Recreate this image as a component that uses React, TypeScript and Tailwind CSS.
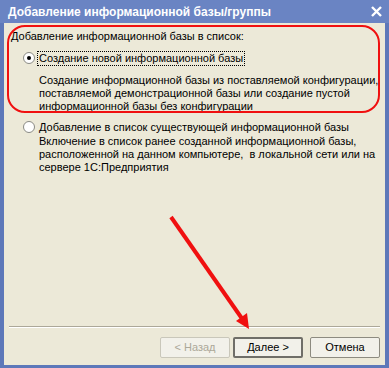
import React from 'react';

const font = { fontFamily: '"Liberation Sans", Arial, sans-serif' };

const Radio = ({ checked }: { checked?: boolean }) => (
  <span className="w-[12px] h-[12px] rounded-full border border-[#8a8a84] bg-white flex items-center justify-center shrink-0">
    {checked && <span className="w-[4px] h-[4px] rounded-full bg-black" />}
  </span>
);

const Button = ({ label, variant }: { label: string; variant?: 'default' | 'disabled' }) => {
  const cls =
    variant === 'default'
      ? 'border-2 border-[#6f6e68] text-black'
      : variant === 'disabled'
      ? 'border border-[#c9c7ba] text-[#aca899]'
      : 'border border-[#8d8b80] text-black';
  return (
    <div
      className={`w-[70px] h-[21px] rounded-[2px] bg-[#f2f1ea] flex items-center justify-center text-[11px] ${cls}`}
    >
      {label}
    </div>
  );
};

const App = () => {
  return (
    <div className="w-[389px] h-[368px] bg-[#5d78b9] flex flex-col relative overflow-hidden" style={font}>
      <div className="h-[23px] bg-[#6a84c3] flex items-center justify-between pl-[8px] pr-[7px]">
        <span className="text-white font-bold text-[12px] leading-none whitespace-nowrap">Добавление информационной базы/группы</span>
        <svg width="11" height="11" viewBox="0 0 11 11">
          <path d="M1 1 L10 10 M10 1 L1 10" stroke="white" strokeWidth="2.4" />
        </svg>
      </div>
      <div className="flex-1 mx-[4px] mb-[3px] bg-[#ece9d8] flex flex-col text-[11px] text-black whitespace-nowrap">
        <div className="pl-[7px] pt-[7px] leading-[13px]">Добавление информационной базы в список:</div>
        <div className="mt-[7px] h-[16px] flex items-center pl-[19px]">
          <Radio checked />
          <span className="ml-[2px] px-[1px] border border-dotted border-black leading-[13px]">
            Создание новой информационной базы
          </span>
        </div>
        <div className="mt-[8px] pl-[35px] leading-[13px]">
          Создание информационной базы из поставляемой конфигурации,
          <br />
          поставляемой демонстрационной базы или создание пустой
          <br />
          информационной базы без конфигурации
        </div>
        <div className="mt-[6px] h-[16px] flex items-center pl-[19px]">
          <Radio />
          <span className="ml-[4px] leading-[13px]">Добавление в список существующей информационной базы</span>
        </div>
        <div className="pl-[35px] leading-[13px]">
          Включение в список ранее созданной информационной базы,
          <br />
          расположенной на данном компьютере,&nbsp; в локальной сети или на
          <br />
          сервере 1С:Предприятия
        </div>
        <div className="flex-1" />
        <div className="mx-[5px] border-t border-[#aca899] border-b border-b-white" />
        <div className="mt-[9px] mb-[7px] pr-[5px] flex justify-end">
          <Button label="< Назад" variant="disabled" />
          <div className="ml-[3px]">
            <Button label="Далее >" variant="default" />
          </div>
          <div className="ml-[7px]">
            <Button label="Отмена" />
          </div>
        </div>
      </div>

      <div className="absolute left-[7px] top-[25px] w-[373px] h-[88px] border-2 border-[#f01010] rounded-[18px]" />
      <svg className="absolute left-0 top-0" width="389" height="368" viewBox="0 0 389 368">
        <line x1="171" y1="217" x2="243" y2="320" stroke="#f01010" strokeWidth="4" />
        <polygon points="249,329 236,321 247,313" fill="#f01010" />
      </svg>
    </div>
  );
};

export default App;
